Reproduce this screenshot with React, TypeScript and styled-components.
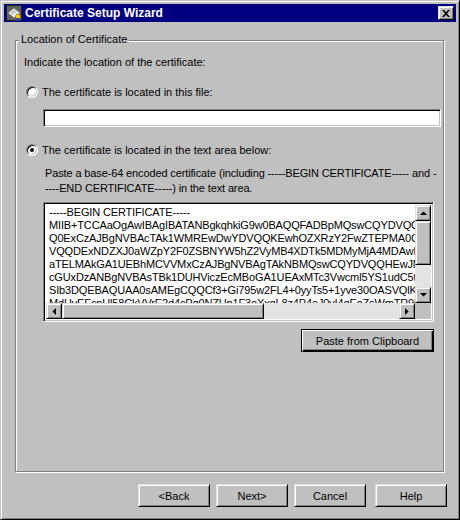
import * as React from 'react'
import styled, { createGlobalStyle, css } from 'styled-components'

const GlobalStyle = createGlobalStyle`
  html, body {
    margin: 0;
    padding: 0;
    background: #c0c0c0;
  }
  body {
    font-family: "Liberation Sans", Arial, sans-serif;
    font-size: 11px;
    color: #000;
  }
`

const raised = css`
  box-sizing: border-box;
  background: #c0c0c0;
  border: 1px solid;
  border-color: #dfdfdf #000 #000 #dfdfdf;
  box-shadow: inset 1px 1px #fff, inset -1px -1px #808080;
`

const sunken = css`
  box-sizing: border-box;
  background: #fff;
  border: 1px solid;
  border-color: #808080 #fff #fff #808080;
  box-shadow: inset 1px 1px #000, inset -1px -1px #c0c0c0;
`

const Window = styled.div`
  box-sizing: border-box;
  width: 460px;
  height: 520px;
  background: #c0c0c0;
  border: 1px solid;
  border-color: #c0c0c0 #000 #000 #c0c0c0;
  box-shadow: inset 1px 1px #fff, inset -1px -1px #808080;
  padding: 3px;
  display: flex;
  flex-direction: column;
`

const TitleBar = styled.div`
  height: 18px;
  background: #000080;
  display: flex;
  align-items: center;
  padding: 0 2px;
`

const TitleText = styled.span`
  flex: 1;
  margin-left: 3px;
  color: #fff;
  font-weight: bold;
  font-size: 12px;
  line-height: 18px;
  white-space: nowrap;
`

const CloseButton = styled.div`
  ${raised};
  width: 16px;
  height: 14px;
  display: flex;
  align-items: center;
  justify-content: center;
`

const GroupBox = styled.div`
  position: relative;
  box-sizing: border-box;
  height: 432px;
  margin: 18px 12px 0 11px;
  padding: 0 1px 0 8px;
  border: 1px solid #808080;
  box-shadow: inset 1px 1px #fff, 1px 1px #fff;
  display: flex;
  flex-direction: column;
`

const Legend = styled.span`
  position: absolute;
  top: -8px;
  left: 3px;
  padding: 0 2px;
  background: #c0c0c0;
  line-height: 13px;
`

const Line = styled.div<{ $top: number; $indent?: number }>`
  margin-top: ${p => p.$top}px;
  margin-left: ${p => p.$indent ?? 0}px;
  line-height: 14px;
  white-space: nowrap;
`

const RadioRow = styled.label<{ $top: number }>`
  display: flex;
  align-items: center;
  gap: 4px;
  height: 16px;
  margin-top: ${p => p.$top}px;
  margin-left: 2px;
  white-space: nowrap;
`

const RadioCircle = styled.span<{ $checked?: boolean }>`
  position: relative;
  box-sizing: border-box;
  width: 12px;
  height: 12px;
  border-radius: 50%;
  background: #fff;
  border: 1px solid;
  border-color: #808080 #fff #fff #808080;
  box-shadow: inset 1px 1px #000, inset -1px -1px #c0c0c0;
  &::after {
    content: '';
    display: ${p => (p.$checked ? 'block' : 'none')};
    position: absolute;
    left: 3px;
    top: 3px;
    width: 4px;
    height: 4px;
    border-radius: 50%;
    background: #000;
  }
`

const TextField = styled.div`
  ${sunken};
  height: 18px;
  margin: 9px 1px 0 19px;
`

const Paragraph = styled.div`
  margin: 8px 0 0 21px;
  line-height: 15px;
  letter-spacing: -0.13px;
  white-space: nowrap;
`

const TextArea = styled.div`
  ${sunken};
  width: 391px;
  height: 120px;
  margin: 6px 0 0 19px;
  padding: 2px;
  display: grid;
  grid-template-columns: 1fr 16px;
  grid-template-rows: 1fr 16px;
`

const Viewport = styled.pre`
  margin: 0;
  padding: 1px 0 0 3px;
  overflow: hidden;
  font-family: "Liberation Sans", Arial, sans-serif;
  font-size: 11px;
  line-height: 13px;
  letter-spacing: -0.15px;
`

const ScrollTrack = styled.div<{ $vertical?: boolean }>`
  display: flex;
  flex-direction: ${p => (p.$vertical ? 'column' : 'row')};
  background: #e4e4e4;
`

const ScrollButton = styled.div`
  ${raised};
  width: 16px;
  height: 16px;
  flex: none;
  display: flex;
  align-items: center;
  justify-content: center;
`

const Thumb = styled.div<{ $size: number; $vertical?: boolean }>`
  ${raised};
  flex: none;
  width: ${p => (p.$vertical ? '16px' : `${p.$size}px`)};
  height: ${p => (p.$vertical ? `${p.$size}px` : '16px')};
`

const Spacer = styled.div`
  flex: 1;
`

const Corner = styled.div`
  background: #c0c0c0;
`

const ButtonRow = styled.div<{ $top: number; $right: number }>`
  display: flex;
  justify-content: flex-end;
  margin-top: ${p => p.$top}px;
  padding-right: ${p => p.$right}px;
`

const Button = styled.div<{ $width?: number; $gap?: number; $default?: boolean }>`
  ${raised};
  width: ${p => p.$width ?? 72}px;
  height: 23px;
  margin-left: ${p => p.$gap ?? 0}px;
  display: flex;
  align-items: center;
  justify-content: center;
  white-space: nowrap;
  ${p =>
    p.$default &&
    css`
      border-color: #000;
      box-shadow: inset 1px 1px #fff, inset -1px -1px #000, inset -2px -2px #808080;
    `}
`

const CertIcon = () => (
  <svg width="16" height="16" viewBox="0 0 16 16">
    <rect x="0.5" y="0.5" width="15" height="15" fill="#606060" stroke="#202020" />
    <polygon points="2,8 8,3 14,8 8,13" fill="#f0f0f0" stroke="#808080" />
    <line x1="5" y1="8" x2="9" y2="5" stroke="#a0a0a0" />
    <line x1="6" y1="9.5" x2="10" y2="6.5" stroke="#a0a0a0" />
    <circle cx="12" cy="11.5" r="2.5" fill="#ffd000" stroke="#806000" strokeWidth="0.6" />
    <rect x="10.5" y="13" width="3" height="3" fill="#2040c0" />
  </svg>
)

const CloseGlyph = () => (
  <svg width="8" height="7" viewBox="0 0 8 7">
    <path d="M0 0h2l2 2.3L6 0h2L5 3.5 8 7H6L4 4.7 2 7H0l3-3.5z" fill="#000" />
  </svg>
)

const Arrow = ({ dir }: { dir: 'up' | 'down' | 'left' | 'right' }) => {
  const pts = {
    up: '0,4 7,4 3.5,0.5',
    down: '0,0 7,0 3.5,3.5',
    left: '4,0 4,7 0.5,3.5',
    right: '0,0 0,7 3.5,3.5',
  }[dir]
  const vertical = dir === 'up' || dir === 'down'
  return (
    <svg width={vertical ? 7 : 4} height={vertical ? 4 : 7} viewBox={vertical ? '0 0 7 4' : '0 0 4 7'}>
      <polygon points={pts} fill="#000" />
    </svg>
  )
}

const certText = [
  '-----BEGIN CERTIFICATE-----',
  'MIIB+TCCAaOgAwIBAgIBATANBgkqhkiG9w0BAQQFADBpMQswCQYDVQQGEwJVUzEL',
  'Q0ExCzAJBgNVBAcTAk1WMREwDwYDVQQKEwhOZXRzY2FwZTEPMA0GA1UECxMG',
  'VQQDExNDZXJ0aWZpY2F0ZSBNYW5hZ2VyMB4XDTk5MDMyMjA4MDAwMloXDTk5',
  'aTELMAkGA1UEBhMCVVMxCzAJBgNVBAgTAkNBMQswCQYDVQQHEwJNVjERMA8G',
  'cGUxDzANBgNVBAsTBk1DUHViczEcMBoGA1UEAxMTc3Vwcml5YS1udC5tY29t',
  'SIb3DQEBAQUAA0sAMEgCQQCf3+Gi795w2FL4+0yyTs5+1yve30OASVQlKzHj',
  'MdHvEFcnUl58CkVVrE2d4cPq0NZUp1F3oXxqL8z4P4eJ0vI4gEoZsWmTR9kYn',
  '-----END CERTIFICATE-----',
].join('\n')

export default function App() {
  return (
    <>
      <GlobalStyle />
      <Window>
        <TitleBar>
          <CertIcon />
          <TitleText>Certificate Setup Wizard</TitleText>
          <CloseButton>
            <CloseGlyph />
          </CloseButton>
        </TitleBar>

        <GroupBox>
          <Legend>Location of Certificate</Legend>
          <Line $top={14}>Indicate the location of the certificate:</Line>

          <RadioRow $top={15}>
            <RadioCircle />
            The certificate is located in this file:
          </RadioRow>
          <TextField />

          <RadioRow $top={15}>
            <RadioCircle $checked />
            The certificate is located in the text area below:
          </RadioRow>

          <Paragraph>
            Paste a base-64 encoded certificate (including -----BEGIN CERTIFICATE----- and -
            <br />
            ----END CERTIFICATE-----) in the text area.
          </Paragraph>

          <TextArea>
            <Viewport>{certText}</Viewport>
            <ScrollTrack $vertical>
              <ScrollButton>
                <Arrow dir="up" />
              </ScrollButton>
              <Thumb $vertical $size={44} />
              <Spacer />
              <ScrollButton>
                <Arrow dir="down" />
              </ScrollButton>
            </ScrollTrack>
            <ScrollTrack>
              <ScrollButton>
                <Arrow dir="left" />
              </ScrollButton>
              <Thumb $size={202} />
              <Spacer />
              <ScrollButton>
                <Arrow dir="right" />
              </ScrollButton>
            </ScrollTrack>
            <Corner />
          </TextArea>

          <ButtonRow $top={7} $right={8}>
            <Button $width={133} $default>
              Paste from Clipboard
            </Button>
          </ButtonRow>
        </GroupBox>

        <ButtonRow $top={12} $right={9}>
          <Button>&lt;Back</Button>
          <Button $gap={6}>Next&gt;</Button>
          <Button $gap={6}>Cancel</Button>
          <Button $gap={9}>Help</Button>
        </ButtonRow>
      </Window>
    </>
  )
}
